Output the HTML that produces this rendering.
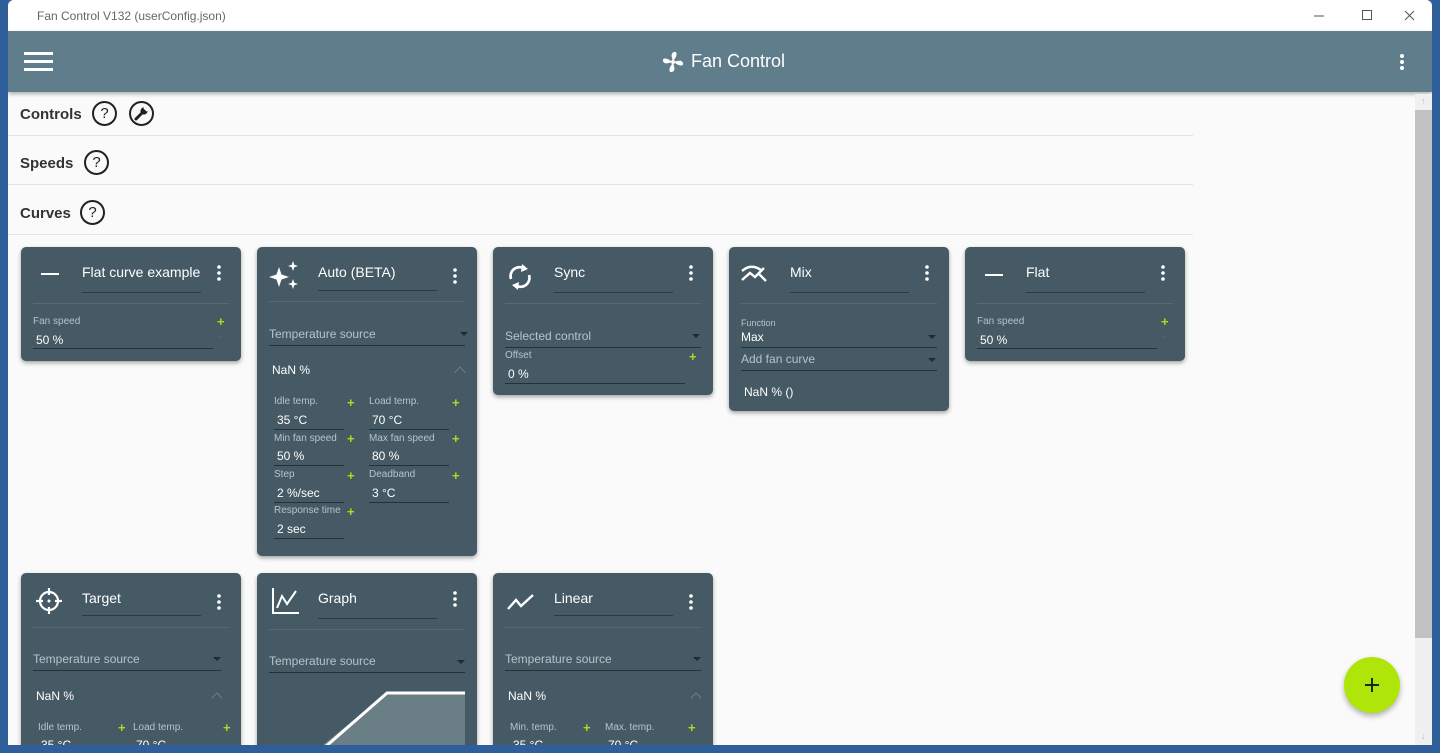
<!DOCTYPE html>
<html><head><meta charset="utf-8"><style>
*{margin:0;padding:0;box-sizing:border-box}
body{width:1440px;height:753px;overflow:hidden;background:#2f5f9a;font-family:"Liberation Sans",sans-serif;position:relative}
.a{position:absolute}
#win{left:8px;top:0;width:1424px;height:745px;background:#fafafa;overflow:hidden;border-radius:6px 6px 0 0}
#title{left:0;top:0;width:1424px;height:31px;background:#fff;font-size:12px;color:#666;padding:9px 0 0 29px}
#hdr{left:0;top:31px;width:1424px;height:61px;background:#607d8b;box-shadow:0 2px 4px rgba(0,0,0,.3)}
.sec{font-size:15px;font-weight:bold;color:#333}
.hr{height:1px;background:#e3e3e3;left:0;width:1185px}
.help{width:25px;height:25px;border:2px solid #222;border-radius:50%;font-size:15px;text-align:center;line-height:21px;color:#222}
.card{background:#455a64;border-radius:5px;width:220px;box-shadow:0 2px 4px rgba(0,0,0,.35);overflow:hidden}
.card .t{left:61px;top:17px;font-size:14px;color:#fff}
.card .tu{left:61px;top:45px;width:119px;height:1px;background:#2c3b42}
.card .kb{left:193px;top:17px;width:10px;height:18px}
.card .sep{left:12px;top:56px;width:196px;height:1px;background:#566b74}
.lbl{font-size:10px;color:#b7c4ca}
.val{font-size:12px;color:#fff}
.ul{height:1px;background:#22313a}
.pl{color:#a6e01a;font-size:13px;font-weight:bold}
.mi{color:#5f737c;font-size:10px}
.sel{font-size:12px;color:#b7c4ca}
.arr{width:0;height:0;border-left:4px solid transparent;border-right:4px solid transparent;border-top:4px solid #1f2b31}
.chev{width:8px;height:8px;border-left:1.5px solid #6b8089;border-top:1.5px solid #6b8089;transform:rotate(45deg)}
</style></head><body>
<div class="a" id="win">
<div class="a" id="title">Fan Control V132 (userConfig.json)</div>
<svg class="a" style="left:1306px;top:8px" width="110" height="16"><line x1="0" y1="8" x2="10" y2="8" stroke="#555"/><rect x="48.5" y="2.5" width="9" height="9" fill="none" stroke="#555"/><path d="M91 3l9 9M100 3l-9 9" stroke="#555"/></svg>
<div class="a" id="hdr">
<svg class="a" style="left:16px;top:20px" width="30" height="22"><rect x="0" y="1" width="29" height="3" fill="#fff"/><rect x="0" y="9" width="29" height="3" fill="#fff"/><rect x="0" y="17" width="29" height="3" fill="#fff"/></svg>
<svg class="a" style="left:653px;top:19px" width="24" height="24" viewBox="0 0 24 24"><g fill="#fff"><circle cx="12" cy="12" r="2"/><path d="M12 11C10 6 10 3 13 2c4-1 3 5-1 9z"/><path d="M12 11C10 6 10 3 13 2c4-1 3 5-1 9z" transform="rotate(90 12 12)"/><path d="M12 11C10 6 10 3 13 2c4-1 3 5-1 9z" transform="rotate(180 12 12)"/><path d="M12 11C10 6 10 3 13 2c4-1 3 5-1 9z" transform="rotate(270 12 12)"/></g></svg>
<div class="a" style="left:683px;top:20px;font-size:18px;color:#fff">Fan Control</div>
<svg class="a" style="left:1391px;top:22px" width="6" height="18"><circle cx="3" cy="3" r="2" fill="#fff"/><circle cx="3" cy="9" r="2" fill="#fff"/><circle cx="3" cy="15" r="2" fill="#fff"/></svg>
</div>
<div class="a" style="left:1407px;top:94px;width:17px;height:651px;background:#f0f0f0"></div>
<div class="a" style="left:1407px;top:110px;width:17px;height:528px;background:#c2c2c2"></div>
<div class="a" style="left:1413px;top:96px;font-size:9px;color:#bbb">↑</div>
<div class="a" style="left:1413px;top:731px;font-size:9px;color:#bbb">↓</div>

<div class="a sec" style="left:12px;top:106px">Controls</div>
<div class="a help" style="left:84px;top:101px">?</div>
<div class="a" style="left:121px;top:101px;width:25px;height:25px;border:2px solid #222;border-radius:50%">
<svg class="a" style="left:2px;top:2px" width="17" height="17" viewBox="0 0 17 17"><path d="M3 14L9.5 7.5" stroke="#222" stroke-width="3" stroke-linecap="round"/><circle cx="11" cy="6" r="3.6" fill="#222"/><path d="M11.5 1.5l4 4-2 1-3-3z" fill="#fafafa"/></svg></div>
<div class="a hr" style="top:135px"></div>
<div class="a sec" style="left:12px;top:155px">Speeds</div>
<div class="a help" style="left:76px;top:150px">?</div>
<div class="a hr" style="top:184px"></div>
<div class="a sec" style="left:12px;top:205px">Curves</div>
<div class="a help" style="left:72px;top:200px">?</div>
<div class="a hr" style="top:234px"></div>

<!-- Card 1 -->
<div class="a card" style="left:13px;top:247px;height:114px">
<div class="a" style="left:20px;top:26px;width:18px;height:2px;background:#fff"></div>
<div class="a t">Flat curve example</div><div class="a tu"></div>
<svg class="a kb" viewBox="0 0 10 18"><circle cx="5" cy="3" r="1.8" fill="#fff"/><circle cx="5" cy="9" r="1.8" fill="#fff"/><circle cx="5" cy="15" r="1.8" fill="#fff"/></svg>
<div class="a sep"></div>
<div class="a lbl" style="left:12px;top:69px">Fan speed</div><div class="a pl" style="left:196px;top:67px">+</div>
<div class="a val" style="left:15px;top:86px">50 %</div><div class="a mi" style="left:198px;top:85px">-</div>
<div class="a ul" style="left:12px;top:101px;width:180px"></div>
</div>

<!-- Auto -->
<div class="a card" style="left:249px;top:247px;height:309px">
<svg class="a" style="left:12px;top:14px" width="32" height="30" viewBox="0 0 32 30"><g fill="#fff"><path d="M10 6l2.5 7.5L20 16l-7.5 2.5L10 26l-2.5-7.5L0 16l7.5-2.5z"/><path d="M24 0l1.3 3.7L29 5l-3.7 1.3L24 10l-1.3-3.7L19 5l3.7-1.3z"/><path d="M24 18l1.3 3.7L29 23l-3.7 1.3L24 28l-1.3-3.7L19 23l3.7-1.3z"/></g></svg>
<div class="a t">Auto (BETA)</div><div class="a tu" style="top:43px"></div>
<svg class="a kb" style="top:20px" viewBox="0 0 10 18"><circle cx="5" cy="3" r="1.8" fill="#fff"/><circle cx="5" cy="9" r="1.8" fill="#fff"/><circle cx="5" cy="15" r="1.8" fill="#fff"/></svg>
<div class="a sep" style="top:54px"></div>
<div class="a sel" style="left:12px;top:80px">Temperature source</div><div class="a arr" style="left:203px;top:85px"></div>
<div class="a ul" style="left:12px;top:98px;width:196px"></div>
<div class="a val" style="left:15px;top:116px">NaN %</div><div class="a chev" style="left:199px;top:121px"></div>
<div class="a lbl" style="left:17px;top:149px">Idle temp.</div><div class="a pl" style="left:90px;top:148px">+</div>
<div class="a val" style="left:20px;top:166px">35 °C</div><div class="a ul" style="left:17px;top:182px;width:70px"></div>
<div class="a lbl" style="left:112px;top:149px">Load temp.</div><div class="a pl" style="left:195px;top:148px">+</div>
<div class="a val" style="left:115px;top:166px">70 °C</div><div class="a ul" style="left:112px;top:182px;width:80px"></div>
<div class="a lbl" style="left:17px;top:186px">Min fan speed</div><div class="a pl" style="left:90px;top:184px">+</div>
<div class="a val" style="left:20px;top:202px">50 %</div><div class="a ul" style="left:17px;top:218px;width:70px"></div>
<div class="a lbl" style="left:112px;top:186px">Max fan speed</div><div class="a pl" style="left:195px;top:184px">+</div>
<div class="a val" style="left:115px;top:202px">80 %</div><div class="a ul" style="left:112px;top:218px;width:80px"></div>
<div class="a lbl" style="left:17px;top:222px">Step</div><div class="a pl" style="left:90px;top:221px">+</div>
<div class="a val" style="left:20px;top:239px">2 %/sec</div><div class="a ul" style="left:17px;top:255px;width:70px"></div>
<div class="a lbl" style="left:112px;top:222px">Deadband</div><div class="a pl" style="left:195px;top:221px">+</div>
<div class="a val" style="left:115px;top:239px">3 °C</div><div class="a ul" style="left:112px;top:255px;width:80px"></div>
<div class="a lbl" style="left:17px;top:258px">Response time</div><div class="a pl" style="left:90px;top:257px">+</div>
<div class="a val" style="left:20px;top:275px">2 sec</div><div class="a ul" style="left:17px;top:291px;width:70px"></div>
</div>

<!-- Sync -->
<div class="a card" style="left:485px;top:247px;height:148px">
<svg class="a" style="left:15px;top:15px" width="24" height="30" viewBox="0 0 24 30"><g fill="none" stroke="#fff" stroke-width="2.6"><path d="M3 17A9 9 0 0 1 17 7"/><path d="M21 13A9 9 0 0 1 7 23"/></g><path d="M14 2l6 5-7 3z" fill="#fff"/><path d="M10 28l-6-5 7-3z" fill="#fff"/></svg>
<div class="a t">Sync</div><div class="a tu" style="top:45px"></div>
<svg class="a kb" viewBox="0 0 10 18"><circle cx="5" cy="3" r="1.8" fill="#fff"/><circle cx="5" cy="9" r="1.8" fill="#fff"/><circle cx="5" cy="15" r="1.8" fill="#fff"/></svg>
<div class="a sep"></div>
<div class="a sel" style="left:12px;top:82px">Selected control</div><div class="a arr" style="left:199px;top:87px"></div>
<div class="a ul" style="left:12px;top:100px;width:196px"></div>
<div class="a lbl" style="left:12px;top:103px">Offset</div><div class="a pl" style="left:196px;top:102px">+</div>
<div class="a val" style="left:15px;top:120px">0 %</div><div class="a ul" style="left:12px;top:136px;width:180px"></div>
</div>

<!-- Mix -->
<div class="a card" style="left:721px;top:247px;height:164px">
<svg class="a" style="left:12px;top:17px" width="28" height="20" viewBox="0 0 28 20"><g fill="none" stroke="#fff" stroke-width="2.4"><path d="M1 7Q10-1 20 6"/><path d="M1 16l8-7 5 4 9-9"/><path d="M17 9l8 8"/></g></svg>
<div class="a t">Mix</div><div class="a tu" style="top:45px"></div>
<svg class="a kb" viewBox="0 0 10 18"><circle cx="5" cy="3" r="1.8" fill="#fff"/><circle cx="5" cy="9" r="1.8" fill="#fff"/><circle cx="5" cy="15" r="1.8" fill="#fff"/></svg>
<div class="a sep"></div>
<div class="a lbl" style="left:12px;top:71px;font-size:9px">Function</div>
<div class="a val" style="left:12px;top:83px">Max</div><div class="a arr" style="left:199px;top:88px"></div>
<div class="a ul" style="left:12px;top:100px;width:196px"></div>
<div class="a sel" style="left:12px;top:105px">Add fan curve</div><div class="a arr" style="left:199px;top:111px"></div>
<div class="a ul" style="left:12px;top:123px;width:196px"></div>
<div class="a val" style="left:15px;top:138px">NaN % ()</div>
</div>

<!-- Flat -->
<div class="a card" style="left:957px;top:247px;height:114px">
<div class="a" style="left:20px;top:27px;width:18px;height:2px;background:#fff"></div>
<div class="a t">Flat</div><div class="a tu" style="top:45px"></div>
<svg class="a kb" viewBox="0 0 10 18"><circle cx="5" cy="3" r="1.8" fill="#fff"/><circle cx="5" cy="9" r="1.8" fill="#fff"/><circle cx="5" cy="15" r="1.8" fill="#fff"/></svg>
<div class="a sep"></div>
<div class="a lbl" style="left:12px;top:69px">Fan speed</div><div class="a pl" style="left:196px;top:67px">+</div>
<div class="a val" style="left:15px;top:86px">50 %</div><div class="a mi" style="left:198px;top:85px">-</div>
<div class="a ul" style="left:12px;top:101px;width:180px"></div>
</div>

<!-- Target -->
<div class="a card" style="left:13px;top:573px;height:200px">
<svg class="a" style="left:14px;top:14px" width="28" height="28" viewBox="0 0 28 28"><g fill="none" stroke="#fff" stroke-width="2.2"><circle cx="14" cy="14" r="9"/><path d="M14 1v7M14 20v7M1 14h7M20 14h7"/></g><circle cx="14" cy="14" r="1.5" fill="#fff"/></svg>
<div class="a t">Target</div><div class="a tu" style="top:42px"></div>
<svg class="a kb" style="top:20px" viewBox="0 0 10 18"><circle cx="5" cy="3" r="1.8" fill="#fff"/><circle cx="5" cy="9" r="1.8" fill="#fff"/><circle cx="5" cy="15" r="1.8" fill="#fff"/></svg>
<div class="a sep" style="top:54px"></div>
<div class="a sel" style="left:12px;top:79px">Temperature source</div><div class="a arr" style="left:192px;top:84px"></div>
<div class="a ul" style="left:12px;top:97px;width:188px"></div>
<div class="a val" style="left:15px;top:116px">NaN %</div><div class="a chev" style="left:192px;top:121px"></div>
<div class="a lbl" style="left:17px;top:149px">Idle temp.</div><div class="a pl" style="left:97px;top:147px">+</div>
<div class="a lbl" style="left:112px;top:149px">Load temp.</div><div class="a pl" style="left:202px;top:147px">+</div>
<div class="a val" style="left:20px;top:165px">35 °C</div><div class="a val" style="left:115px;top:165px">70 °C</div>
</div>

<!-- Graph -->
<div class="a card" style="left:249px;top:573px;height:200px">
<svg class="a" style="left:14px;top:14px" width="30" height="28" viewBox="0 0 30 28"><g fill="none" stroke="#fff" stroke-width="2"><path d="M2 1v25h26"/><path d="M6 21l5-12 5 8 9-13"/></g></svg>
<div class="a t">Graph</div><div class="a tu" style="top:45px"></div>
<svg class="a kb" viewBox="0 0 10 18"><circle cx="5" cy="3" r="1.8" fill="#fff"/><circle cx="5" cy="9" r="1.8" fill="#fff"/><circle cx="5" cy="15" r="1.8" fill="#fff"/></svg>
<div class="a sep"></div>
<div class="a sel" style="left:12px;top:81px">Temperature source</div><div class="a arr" style="left:200px;top:87px"></div>
<div class="a ul" style="left:12px;top:99px;width:196px"></div>
<svg class="a" style="left:12px;top:115px" width="196" height="90"><path d="M50 60L118 5H196V90H0z" fill="#6a7e86"/><path d="M0 108L118 5H196" fill="none" stroke="#fff" stroke-width="3"/></svg>
</div>

<!-- Linear -->
<div class="a card" style="left:485px;top:573px;height:200px">
<svg class="a" style="left:14px;top:20px" width="28" height="18" viewBox="0 0 28 18"><path d="M1 16l8-9 5 6L26 2" fill="none" stroke="#fff" stroke-width="2.4"/></svg>
<div class="a t">Linear</div><div class="a tu" style="top:42px"></div>
<svg class="a kb" style="top:20px" viewBox="0 0 10 18"><circle cx="5" cy="3" r="1.8" fill="#fff"/><circle cx="5" cy="9" r="1.8" fill="#fff"/><circle cx="5" cy="15" r="1.8" fill="#fff"/></svg>
<div class="a sep" style="top:54px"></div>
<div class="a sel" style="left:12px;top:79px">Temperature source</div><div class="a arr" style="left:200px;top:84px"></div>
<div class="a ul" style="left:12px;top:97px;width:196px"></div>
<div class="a val" style="left:15px;top:116px">NaN %</div><div class="a chev" style="left:199px;top:121px"></div>
<div class="a lbl" style="left:17px;top:149px">Min. temp.</div><div class="a pl" style="left:90px;top:147px">+</div>
<div class="a lbl" style="left:112px;top:149px">Max. temp.</div><div class="a pl" style="left:195px;top:147px">+</div>
<div class="a val" style="left:20px;top:165px">35 °C</div><div class="a val" style="left:115px;top:165px">70 °C</div>
</div>

<div class="a" style="left:1336px;top:657px;width:56px;height:56px;border-radius:50%;background:#b0e50a;box-shadow:0 3px 6px rgba(0,0,0,.3)">
<svg class="a" style="left:20px;top:20px" width="16" height="16"><path d="M8 1v14M1 8h14" stroke="#1a2a10" stroke-width="2"/></svg></div>
</div>
</body></html>
